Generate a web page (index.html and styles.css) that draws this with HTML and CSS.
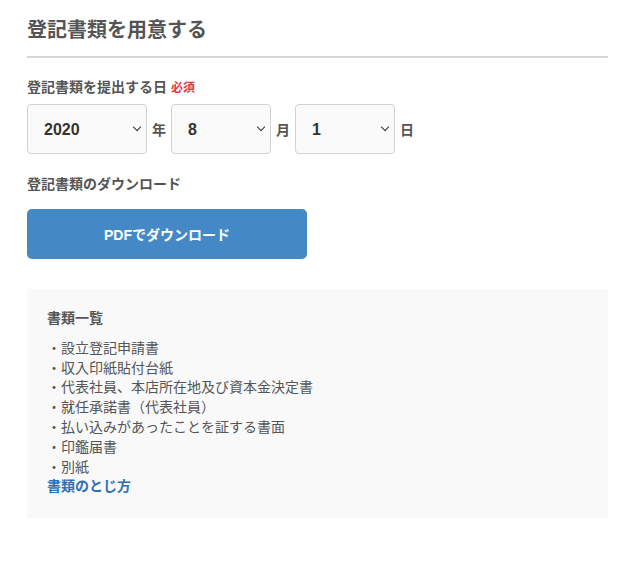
FILE: index.html
```html
<!DOCTYPE html>
<html lang="ja">

<head>
    <meta charset="UTF-8">
    <meta name="viewport" content="width=device-width, initial-scale=1.0">
    <title>登記書類を用意する</title>
    <link rel="stylesheet" href="styles.css">
</head>

<body>
    <div class="wrap">
        <h1 class="title">登記書類を用意する</h1>

        <p class="label">登記書類を提出する日 <span class="must">必須</span></p>
        <div class="date">
            <div class="sel sel-year">
                <select>
                    <option>2020</option>
                </select>
            </div>
            <span class="unit">年</span>
            <div class="sel">
                <select>
                    <option>8</option>
                </select>
            </div>
            <span class="unit">月</span>
            <div class="sel">
                <select>
                    <option>1</option>
                </select>
            </div>
            <span class="unit">日</span>
        </div>

        <p class="label label-dl">登記書類のダウンロード</p>
        <a class="btn" href="#">PDFでダウンロード</a>

        <div class="docs">
            <p class="docs-title">書類一覧</p>
            <ul>
                <li>・設立登記申請書</li>
                <li>・収入印紙貼付台紙</li>
                <li>・代表社員、本店所在地及び資本金決定書</li>
                <li>・就任承諾書（代表社員）</li>
                <li>・払い込みがあったことを証する書面</li>
                <li>・印鑑届書</li>
                <li>・別紙</li>
            </ul>
            <a class="docs-link" href="#">書類のとじ方</a>
        </div>
    </div>
</body>

</html>
```

FILE: styles.css
```css
* {
    padding: 0;
    margin: 0;
    box-sizing: border-box;
}

body {
    font-family: "Liberation Sans", "Noto Sans CJK JP", sans-serif;
    color: #555;
    background: #fff;
}

.wrap {
    width: 608px;
    padding-left: 27px;
}

.title {
    margin-top: 15px;
    padding-bottom: 11px;
    font-size: 20px;
    line-height: 30px;
    font-weight: bold;
    color: #555;
    border-bottom: 2px solid #d5d5d5;
}

.label {
    margin-top: 19px;
    font-size: 14px;
    line-height: 20px;
    font-weight: bold;
}

.must {
    font-size: 12px;
    color: #e0383e;
}

.date {
    display: flex;
    align-items: center;
    gap: 5px;
    margin-top: 6px;
}

.sel {
    position: relative;
    width: 100px;
    height: 50px;
}

.sel-year {
    width: 120px;
}

.sel select {
    appearance: none;
    -webkit-appearance: none;
    width: 100%;
    height: 100%;
    padding-left: 16px;
    border: 1px solid #d2d2d2;
    border-radius: 4px;
    background: #fafafa;
    font-family: inherit;
    font-size: 16px;
    font-weight: bold;
    color: #333;
    outline: none;
}

.sel::after {
    content: "";
    position: absolute;
    right: 7px;
    top: 20px;
    width: 5px;
    height: 5px;
    border-right: 1.5px solid #333;
    border-bottom: 1.5px solid #333;
    transform: rotate(45deg);
    pointer-events: none;
}

.unit {
    font-size: 14px;
    font-weight: bold;
}

.label-dl {
    margin-top: 20px;
}

.btn {
    display: flex;
    align-items: center;
    justify-content: center;
    width: 280px;
    height: 50px;
    margin-top: 15px;
    border-radius: 5px;
    background: #4489c6;
    color: #fff;
    font-size: 14px;
    font-weight: bold;
    text-decoration: none;
}

.docs {
    margin-top: 30px;
    padding: 20px 20px 21px;
    background: #f9f9f9;
    font-size: 14px;
    line-height: 19.8px;
}

.docs-title {
    font-weight: bold;
}

.docs ul {
    list-style: none;
    margin-top: 10px;
}

.docs-link {
    display: block;
    font-weight: bold;
    color: #2d70b4;
    text-decoration: none;
}
```
